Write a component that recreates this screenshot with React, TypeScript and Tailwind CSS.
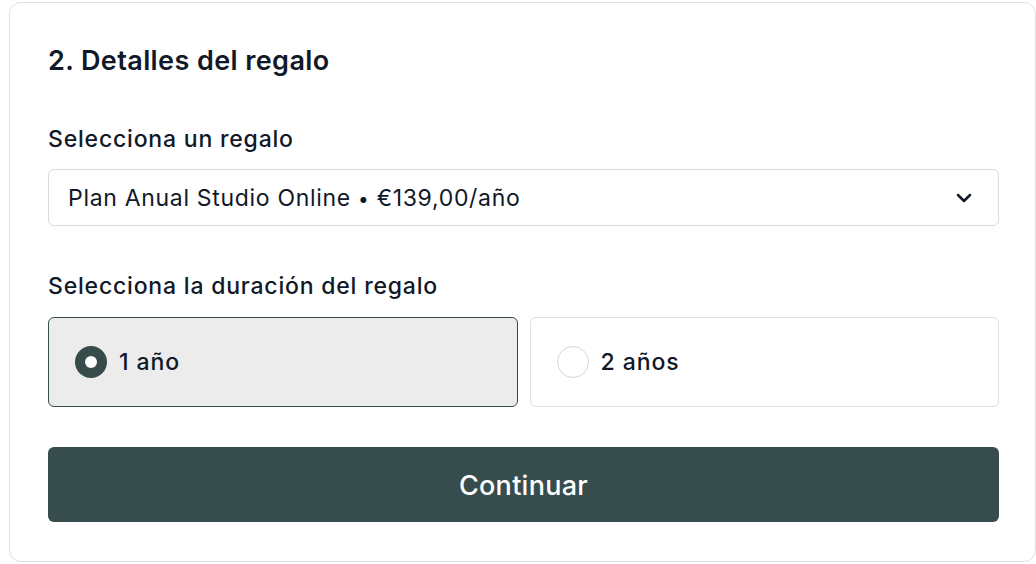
import React, { useState } from "react";
import { ChevronDown } from "lucide-react";

const durations = [
  { id: "1", label: "1 año" },
  { id: "2", label: "2 años" },
];

export default function App() {
  const [selected, setSelected] = useState("1");

  return (
    <div className="min-h-[564px] bg-white font-['Inter',sans-serif] text-[#111827]">
      <div className="ml-[9px] mt-[2px] w-[1027px] h-[560px] rounded-xl border border-[#dcdfe4] pl-[38px] pt-[43px]">
        <div className="w-[951px]">
          <h2 className="text-[27px] leading-[30px] font-semibold tracking-[0.015em]">2. Detalles del regalo</h2>

          <label className="block mt-[49px] text-[23px] leading-[28px] font-medium tracking-[0.035em]">
            Selecciona un regalo
          </label>
          <div className="mt-4 h-[57px] flex items-center justify-between rounded-md border border-[#d8dbe0] pl-[19px] pr-[22px]">
            <span className="text-[23px] tracking-[0.03em] pt-[2px]">
              Plan Anual Studio Online <span className="text-[19px]">•</span> €139,00/año
            </span>
            <ChevronDown size={24} strokeWidth={2.5} className="text-[#111827]" />
          </div>

          <label className="block mt-[46px] text-[23px] leading-[28px] font-medium tracking-[0.035em]">
            Selecciona la duración del regalo
          </label>
          <div className="mt-[17px] grid grid-cols-2 gap-3">
            {durations.map((d) => {
              const active = selected === d.id;
              return (
                <button
                  key={d.id}
                  type="button"
                  onClick={() => setSelected(d.id)}
                  className={
                    active
                      ? "h-[90px] flex items-center gap-3 rounded-md border border-[#374b4b] bg-[#ebeceb] pl-[26px] text-left"
                      : "h-[90px] flex items-center gap-3 rounded-md border border-[#dcdfe4] bg-white pl-[26px] text-left"
                  }
                >
                  {active ? (
                    <span className="w-8 h-8 rounded-full bg-[#374b4b] flex items-center justify-center">
                      <span className="w-3 h-3 rounded-full bg-white"></span>
                    </span>
                  ) : (
                    <span className="w-8 h-8 rounded-full border border-[#d4d6da] bg-white"></span>
                  )}
                  <span className="text-[23px] font-medium tracking-[0.04em]">{d.label}</span>
                </button>
              );
            })}
          </div>

          <button
            type="button"
            className="mt-10 w-full h-[75px] rounded-md bg-[#374c4d] pt-[4px] text-white text-[27px] font-medium tracking-[0.01em]"
          >
            Continuar
          </button>
        </div>
      </div>
    </div>
  );
}
